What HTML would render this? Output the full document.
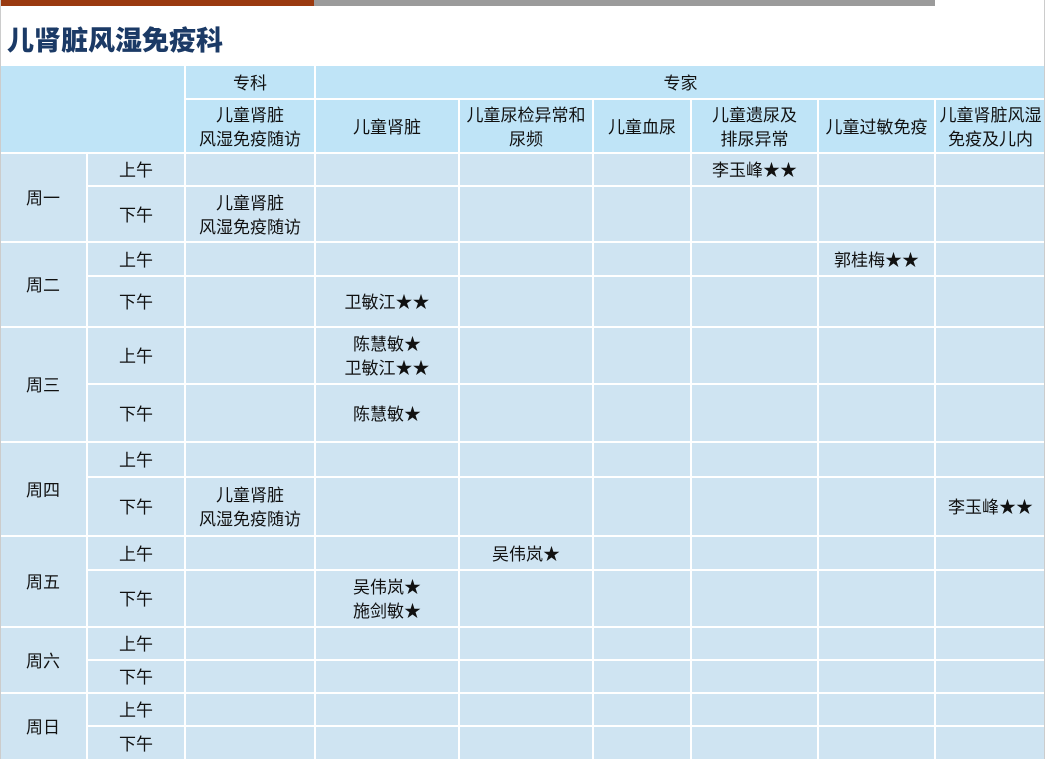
<!DOCTYPE html>
<html><head><meta charset="utf-8"><style>
body{margin:0;width:1045px;height:759px;overflow:hidden;background:#fff;font-family:"Liberation Sans","Noto Sans CJK SC",sans-serif;position:relative}
.bar1{position:absolute;left:0;top:0;width:314px;height:6px;background:#9a3a10}
.bar2{position:absolute;left:314px;top:0;width:621px;height:6px;background:#9b9b9b}
.frame{position:absolute;left:0;top:0;width:1043px;height:759px;border-left:1px solid #ccc;border-right:1px solid #ccc}
h1{position:absolute;left:7px;top:19px;margin:0;font-size:27px;font-weight:900;color:#1b3a66;font-family:"Noto Sans CJK SC",sans-serif}
.g{position:absolute;left:0;top:66px;display:grid;grid-template-columns:86px 98px 130px 144px 134px 98px 127px 117px 111px;grid-template-rows:32px 54px 33px 56px 34px 51px 57px 58px 35px 59px 34px 57px 33px 33px 33px 34px}
.g div{box-sizing:border-box;border-left:2px solid #fff;border-top:2px solid #fff;background:#cfe4f2;display:flex;align-items:center;justify-content:center;text-align:center;font-size:17px;line-height:24px;color:#111;padding-top:3px;white-space:nowrap}
.g div.h{background:#bfe4f7}
.g div.t{border-top:0}
.g div.f{border-left:0}
</style></head><body>
<div class="bar1"></div><div class="bar2"></div>
<h1>儿肾脏风湿免疫科</h1>
<div class="g">
<div class="h t f" style="grid-column:1/3;grid-row:1/3"></div>
<div class="h t">专科</div>
<div class="h t" style="grid-column:4/10">专家</div>
<div class="h">儿童肾脏<br>风湿免疫随访</div>
<div class="h">儿童肾脏</div>
<div class="h">儿童尿检异常和<br>尿频</div>
<div class="h">儿童血尿</div>
<div class="h">儿童遗尿及<br>排尿异常</div>
<div class="h">儿童过敏免疫</div>
<div class="h">儿童肾脏风湿<br>免疫及儿内</div>

<div class="f" style="grid-row:3/5">周一</div>
<div>上午</div><div></div><div></div><div></div><div></div><div>李玉峰★★</div><div></div><div></div>
<div>下午</div><div>儿童肾脏<br>风湿免疫随访</div><div></div><div></div><div></div><div></div><div></div><div></div>

<div class="f" style="grid-row:5/7">周二</div>
<div>上午</div><div></div><div></div><div></div><div></div><div></div><div>郭桂梅★★</div><div></div>
<div>下午</div><div></div><div>卫敏江★★</div><div></div><div></div><div></div><div></div><div></div>

<div class="f" style="grid-row:7/9">周三</div>
<div>上午</div><div></div><div>陈慧敏★<br>卫敏江★★</div><div></div><div></div><div></div><div></div><div></div>
<div>下午</div><div></div><div>陈慧敏★</div><div></div><div></div><div></div><div></div><div></div>

<div class="f" style="grid-row:9/11">周四</div>
<div>上午</div><div></div><div></div><div></div><div></div><div></div><div></div><div></div>
<div>下午</div><div>儿童肾脏<br>风湿免疫随访</div><div></div><div></div><div></div><div></div><div></div><div>李玉峰★★</div>

<div class="f" style="grid-row:11/13">周五</div>
<div>上午</div><div></div><div></div><div>吴伟岚★</div><div></div><div></div><div></div><div></div>
<div>下午</div><div></div><div>吴伟岚★<br>施剑敏★</div><div></div><div></div><div></div><div></div><div></div>

<div class="f" style="grid-row:13/15">周六</div>
<div>上午</div><div></div><div></div><div></div><div></div><div></div><div></div><div></div>
<div>下午</div><div></div><div></div><div></div><div></div><div></div><div></div><div></div>

<div class="f" style="grid-row:15/17">周日</div>
<div>上午</div><div></div><div></div><div></div><div></div><div></div><div></div><div></div>
<div>下午</div><div></div><div></div><div></div><div></div><div></div><div></div><div></div>
</div>
<div class="frame"></div>
</body></html>
